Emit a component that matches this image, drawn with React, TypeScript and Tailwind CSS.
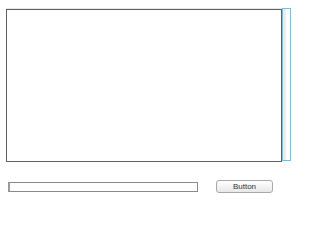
import React from 'react';

const App = () => {
  return (
    <div className="w-[300px] h-[208px] bg-white relative font-['Liberation_Sans',Arial,sans-serif]">
      <div className="flex pt-[8px] pl-[6px]">
        <div className="flex flex-col">
          <div className="h-px w-[276px] bg-[#e4e8ec]" />
          <div className="w-[276px] h-[153px] border border-[#606060] bg-white" />
        </div>
        <div className="w-[9px] h-[153px] border border-[#5ac8fa] bg-white flex">
          <div className="w-[3px] h-full bg-[#ececec]" />
        </div>
      </div>
      <div className="flex items-center mt-[18px] pl-[8px]">
        <div className="w-[190px] h-[10px] border border-[#8a8a8a] border-l-2 border-l-[#9a9a9a] bg-white" />
        <button className="ml-[18px] w-[57px] h-[13px] rounded-[3px] border border-[#a8a8a8] bg-gradient-to-b from-white to-[#e8e8e8] text-[8px] font-normal leading-none text-[#333]">
          Button
        </button>
      </div>
    </div>
  );
};

export default App;
